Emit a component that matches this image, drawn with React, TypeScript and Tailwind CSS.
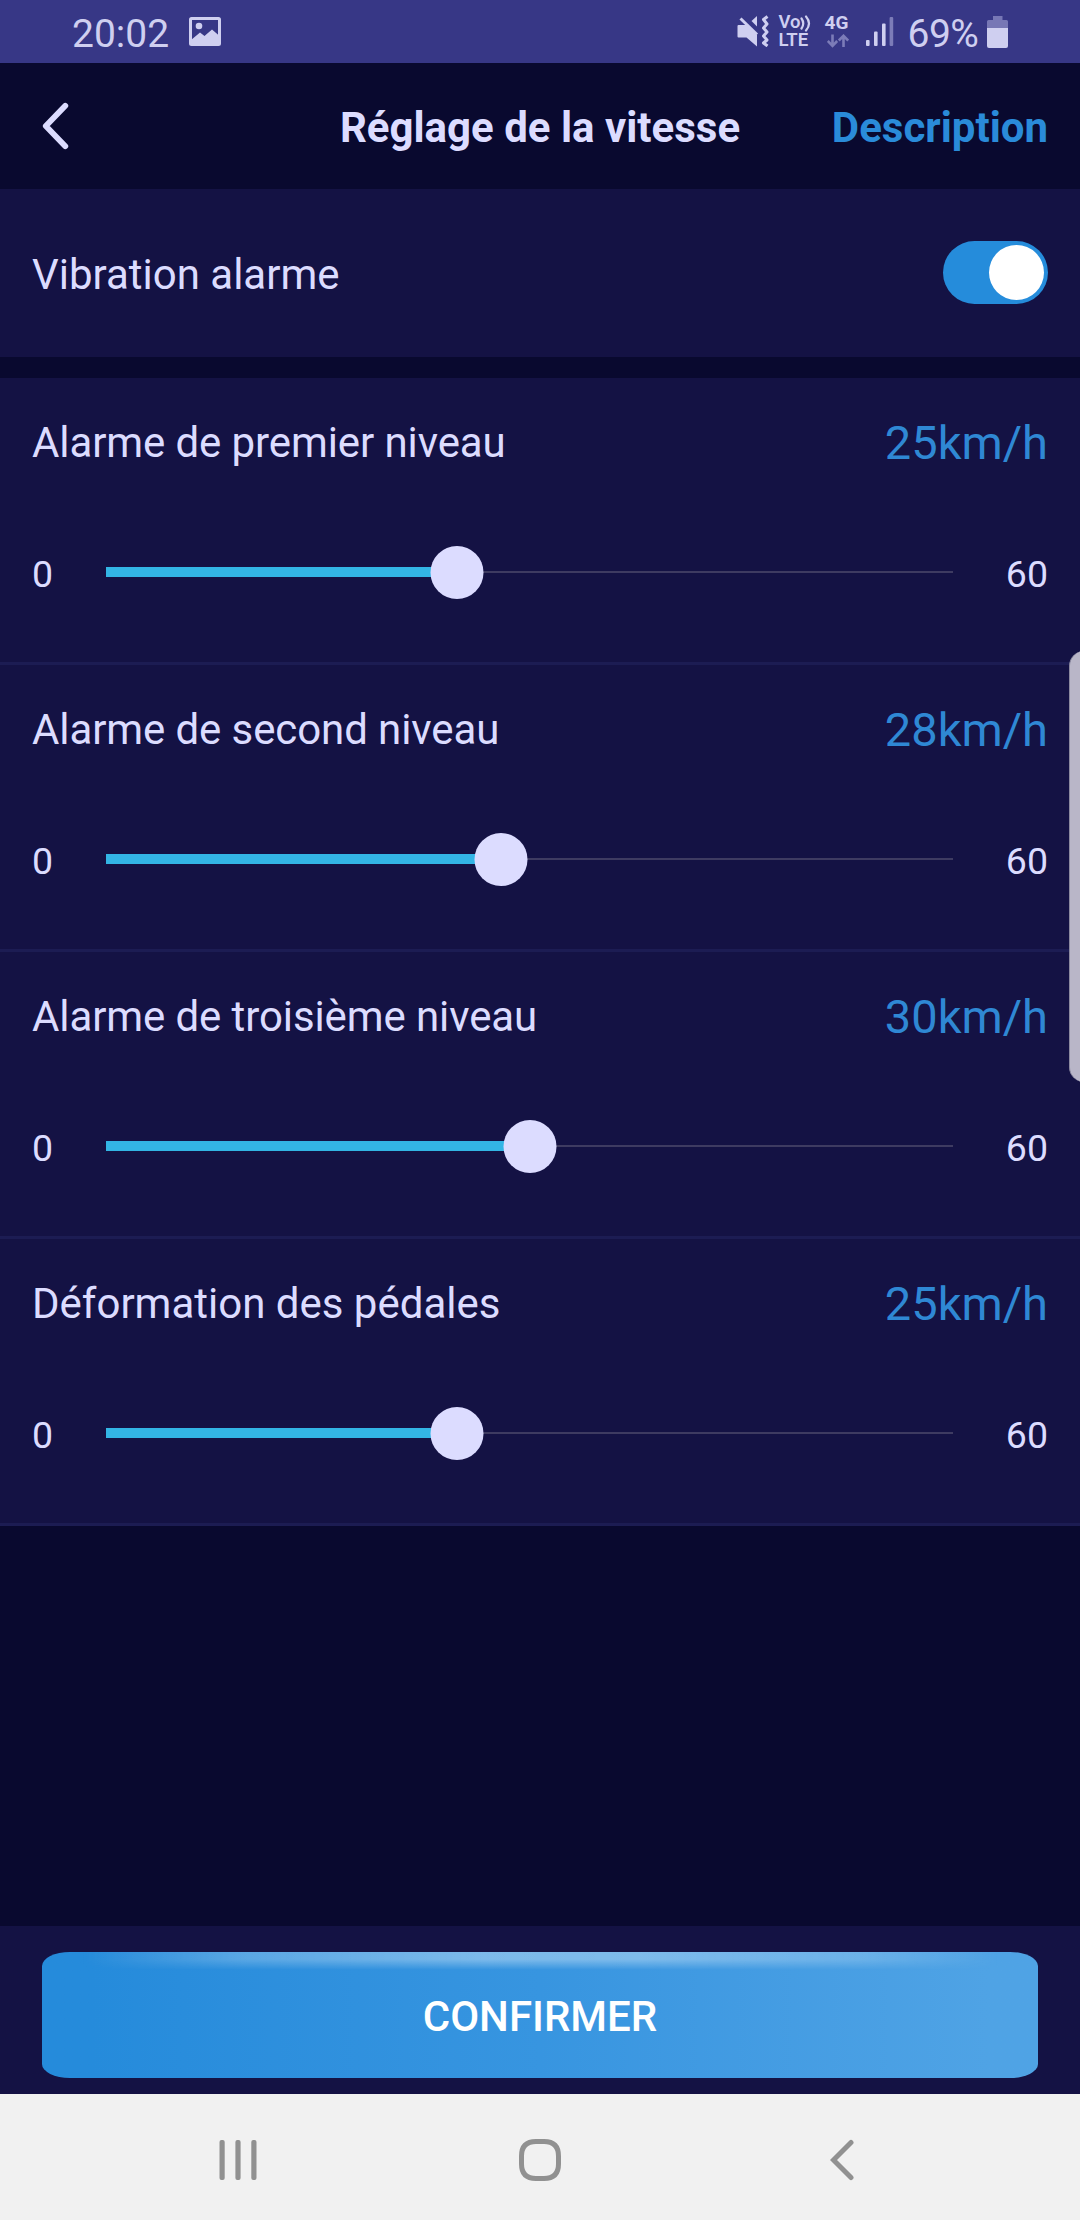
import React, { useState } from "react";

interface SpeedSetting {
  id: string;
  label: string;
  value: number;
  position: number;
}

const MAX_SPEED = 60;

const settings: SpeedSetting[] = [
  { id: "first", label: "Alarme de premier niveau", value: 25, position: 41.4 },
  { id: "second", label: "Alarme de second niveau", value: 28, position: 46.6 },
  { id: "third", label: "Alarme de troisième niveau", value: 30, position: 50 },
  { id: "pedals", label: "Déformation des pédales", value: 25, position: 41.4 },
];

function StatusBar() {
  return (
    <div className="flex h-[63px] shrink-0 items-start bg-[#373786] pl-[72px] text-[#cfcff0]">
      <span className="mt-[11px] w-[117px] text-[39px] leading-[46px]">20:02</span>

      {/* Screenshot notification */}
      <svg className="mt-[17px] h-[29px] w-[32px]" viewBox="0 0 32 29" fill="none">
        <rect x="1.5" y="1.5" width="29" height="26" rx="1" stroke="currentColor" strokeWidth="3" />
        <path d="M2 23 L11 15.5 L15.5 19 L23 12.5 L30 18.5 V27 H2 Z" fill="currentColor" />
        <circle cx="10" cy="9" r="3.3" fill="currentColor" />
      </svg>

      <div className="ml-auto flex items-start">
        {/* Muted, vibrating */}
        <svg className="mt-[15px] h-[32px] w-[33px]" viewBox="0 0 33 32" fill="none">
          <path d="M0.5 11 Q0.5 10 1.5 10 H9.5 L20 20 V31.5 L9.5 22.5 H1.5 Q0.5 22.5 0.5 21.5 Z" fill="currentColor" />
          <path d="M3.5 3.5 L20 19.5" stroke="currentColor" strokeWidth="3" />
          <path d="M20 1 V11.5 L14.5 6 Z" fill="currentColor" />
          <path d="M30.5 1.5 L26.5 4.5 L30 9 L26.5 13 L30 17 L26.5 21 L30 25 L26.5 28 L30.5 31" stroke="currentColor" strokeWidth="3" strokeLinejoin="round" />
        </svg>

        {/* VoLTE */}
        <div className="mt-[14px] ml-[9px] w-[46px] text-[18.5px] leading-[17px] font-semibold">
          <div className="flex items-start">
            <span className="w-[21px]">Vo</span>
            <svg className="mt-[1px] h-[17px] w-[12px]" viewBox="0 0 12 17" fill="none" stroke="currentColor" strokeWidth="2.2" strokeLinecap="round">
              <path d="M1.5 3.5 Q5 8.5 1.5 13.5" />
              <path d="M6 1.5 Q12 8.5 6 15.5" />
            </svg>
          </div>
          <div>LTE</div>
        </div>

        {/* Mobile data */}
        <div className="mt-[13px] flex w-[41px] flex-col">
          <span className="h-[21px] text-[19px] leading-[20px] font-bold">4G</span>
          <svg className="ml-[2px] h-[14px] w-[22px]" viewBox="0 0 22 14" fill="none" stroke="#7c7cb8" strokeWidth="2.6">
            <path d="M5.5 0.5 V11.5 M0.8 7 L5.5 11.8 L10.2 7" />
            <path d="M16.5 13 V2 M11.8 6.5 L16.5 1.8 L21.2 6.5" />
          </svg>
        </div>

        <svg className="mt-[16px] h-[31px] w-[28px]" viewBox="0 0 28 31" fill="currentColor">
          <rect x="0" y="24" width="3.6" height="6" rx="1" />
          <rect x="8" y="15.5" width="3.6" height="14.5" rx="1" />
          <rect x="16" y="7.5" width="3.6" height="22.5" rx="1" />
          <rect x="23.6" y="1" width="3.6" height="29" rx="1" fill="#7c7cb8" />
        </svg>

        <span className="mt-[11px] ml-[14px] w-[79.5px] text-[39px] leading-[46px] tracking-[-0.5px]">69%</span>

        <svg className="mt-[16px] mr-[72px] h-[32px] w-[21px]" viewBox="0 0 21 32">
          <path d="M6 0 H15.5 V4 H19.5 Q21 4 21 5.5 V12 H0 V5.5 Q0 4 1.5 4 H6 Z" fill="#7777b5" />
          <path d="M0 12 H21 V30 Q21 32 19 32 H2 Q0 32 0 30 Z" fill="currentColor" />
        </svg>
      </div>
    </div>
  );
}

function Header() {
  return (
    <header className="grid h-[126px] shrink-0 grid-cols-[1fr_auto_1fr] items-center pt-[3px] pr-[32px] pl-[42px] text-[42px] leading-[50px] font-bold">
      <button className="w-[28px]" aria-label="Retour">
        <svg className="-mt-[4px] h-[48px] w-[28px]" viewBox="0 0 28 48" fill="none">
          <path d="M23.3 3.8 L3.8 24 L23.3 44.2" stroke="#dcdcff" strokeWidth="5.8" strokeLinecap="round" strokeLinejoin="round" />
        </svg>
      </button>
      <h1 className="mr-[10px]">Réglage de la vitesse</h1>
      <button className="justify-self-end text-[#2a8bd9]">Description</button>
    </header>
  );
}

function Toggle({ on, onChange }: { on: boolean; onChange: () => void }) {
  return (
    <button
      role="switch"
      aria-checked={on}
      onClick={onChange}
      className={`-mt-[1px] flex h-[63px] w-[105px] items-center rounded-full p-[4px] ${
        on ? "justify-end bg-[#258cdb]" : "justify-start bg-[#3a3a6c]"
      }`}
    >
      <span className="size-[55px] rounded-full bg-white" />
    </button>
  );
}

function SpeedRow({ setting }: { setting: SpeedSetting }) {
  return (
    <div className="group h-[287px] border-b-[3px] border-[#1c1c53] bg-[#141244] px-[32px]">
      <div className="flex h-[129px] items-center justify-between">
        <span className="text-[42px] tracking-[-0.1px] group-last:tracking-normal">{setting.label}</span>
        <span className="mt-[1px] text-[47px] text-[#2f88d4]">{setting.value}km/h</span>
      </div>
      <div className="flex h-[131px] items-center">
        <span className="mt-[3px] w-[74px] text-[37.5px]">0</span>
        <div className="relative flex h-[53px] flex-1 items-center">
          <div className="-mt-[1px] h-[2px] w-full bg-[#3e3b61]" />
          <div
            className="absolute left-0 -mt-[1px] h-[10px] bg-[#33b5e5]"
            style={{ width: `${setting.position}%` }}
          />
          <div
            className="absolute size-[53px] -translate-x-1/2 rounded-full bg-[#dcdcff]"
            style={{ left: `${setting.position}%` }}
          />
        </div>
        <span className="mt-[3px] w-[95px] text-right text-[37.5px]">{MAX_SPEED}</span>
      </div>
    </div>
  );
}

function NavigationBar() {
  return (
    <nav className="grid h-[126px] shrink-0 grid-cols-3 items-center justify-items-center bg-[#f1f1f1] px-[87px] pt-[6px]">
      <svg className="h-[42px] w-[40px]" viewBox="0 0 40 42" fill="#919191">
        <rect x="1.5" y="1" width="5.2" height="40" rx="2" />
        <rect x="17.4" y="1" width="5.2" height="40" rx="2" />
        <rect x="33.3" y="1" width="5.2" height="40" rx="2" />
      </svg>
      <svg className="size-[42px]" viewBox="0 0 42 42" fill="none">
        <path
          d="M17 2.5 H25 Q39.5 2.5 39.5 17 V25 Q39.5 39.5 25 39.5 H17 Q2.5 39.5 2.5 25 V17 Q2.5 2.5 17 2.5 Z"
          stroke="#919191"
          strokeWidth="5"
        />
      </svg>
      <svg className="h-[42px] w-[24px]" viewBox="0 0 24 42" fill="none">
        <path d="M21 3.5 L3.5 21 L21 38.5" stroke="#919191" strokeWidth="5" strokeLinecap="round" />
      </svg>
    </nav>
  );
}

export default function App() {
  const [vibration, setVibration] = useState(true);

  return (
    <div className="relative flex h-[2220px] w-[1080px] flex-col overflow-hidden bg-[#09092f] font-['Roboto',sans-serif] text-[#dcdcff]">
      <StatusBar />
      <Header />

      <div className="mb-[21px] flex h-[168px] shrink-0 items-center justify-between bg-[#141244] px-[32px]">
        <span className="mt-[3px] text-[42px]">Vibration alarme</span>
        <Toggle on={vibration} onChange={() => setVibration(!vibration)} />
      </div>

      <main className="flex-1">
        {settings.map((setting) => (
          <SpeedRow key={setting.id} setting={setting} />
        ))}
      </main>

      {/* Confirm */}
      <div className="h-[168px] shrink-0 bg-[#141244] px-[42px] pt-[26px]">
        <button className="relative flex h-[126px] w-full items-center justify-center overflow-hidden rounded-[28px/14px] bg-linear-to-r from-[#258bdb] from-5% via-[#3795e0] via-50% to-[#4fa3e5] to-95% text-[42px] font-medium text-white">
          <span className="absolute inset-x-0 top-0 h-[18px] bg-[linear-gradient(to_right,transparent_4%,rgba(255,255,255,0.22)_20%,rgba(255,255,255,0.36)_45%,rgba(255,255,255,0.34)_60%,rgba(255,255,255,0.2)_82%,transparent_96%)] mask-b-from-40%" />
          <span className="mt-[3px]">CONFIRMER</span>
        </button>
      </div>

      <NavigationBar />

      {/* Edge panel handle */}
      <div className="absolute top-[651px] -right-[5px] h-[431px] w-[16px] rounded-l-[15px] border-l border-[#8b899f] bg-[#b9b6c8]" />
    </div>
  );
}
